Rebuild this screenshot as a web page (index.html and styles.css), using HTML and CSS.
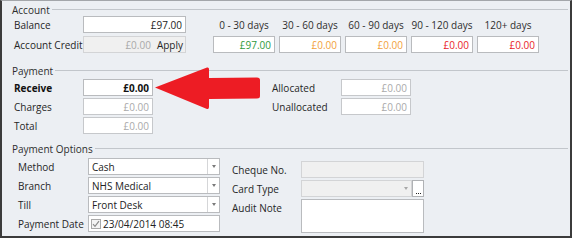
FILE: index.html
```html
<!DOCTYPE html>
<html>
<head>
<meta charset="utf-8">
<link rel="stylesheet" href="styles.css">
</head>
<body>
<div class="frame">
  <section class="group">
    <div class="legend"><span>Account</span></div>
    <div class="acc-body">
      <div class="grid acc-form">
        <label>Balance</label>
        <div class="field">£97.00</div>
        <label>Account Credit</label>
        <div class="field disabled credit"><span>£0.00</span><span class="apply">Apply</span></div>
      </div>
      <div class="aging">
        <div class="head">0 - 30 days</div>
        <div class="head">30 - 60 days</div>
        <div class="head">60 - 90 days</div>
        <div class="head">90 - 120 days</div>
        <div class="head">120+ days</div>
        <div class="field green">£97.00</div>
        <div class="field orange">£0.00</div>
        <div class="field orange">£0.00</div>
        <div class="field red">£0.00</div>
        <div class="field red">£0.00</div>
      </div>
    </div>
  </section>

  <section class="group payment">
    <div class="legend"><span>Payment</span></div>
    <div class="pay-body">
      <div class="grid pay-form">
        <label class="bold">Receive</label>
        <div class="field bold-val">£0.00</div>
        <label>Charges</label>
        <div class="field muted">£0.00</div>
        <label>Total</label>
        <div class="field muted">£0.00</div>
      </div>
      <div class="grid alloc-form">
        <label>Allocated</label>
        <div class="field muted">£0.00</div>
        <label>Unallocated</label>
        <div class="field muted">£0.00</div>
      </div>
    </div>
  </section>

  <section class="group options">
    <div class="legend"><span>Payment Options</span></div>
    <div class="opt-body">
      <div class="grid opt-left">
        <label>Method</label>
        <div class="combo"><span class="val">Cash</span><span class="drop"><i class="tri"></i></span></div>
        <label>Branch</label>
        <div class="combo"><span class="val">NHS Medical</span><span class="drop"><i class="tri"></i></span></div>
        <label>Till</label>
        <div class="combo"><span class="val">Front Desk</span><span class="drop"><i class="tri"></i></span></div>
        <label>Payment Date</label>
        <div class="combo date"><span class="check"><svg width="8" height="8" viewBox="0 0 8 8"><path d="M1 4.2 L3 6.3 L7 1.2" fill="none" stroke="#8a8a8a" stroke-width="1.2"/></svg></span><span class="val">23/04/2014 08:45</span></div>
      </div>
      <div class="grid opt-right">
        <label>Cheque No.</label>
        <div class="field disabled"></div>
        <label>Card Type</label>
        <div class="card-row">
          <div class="combo disabled-combo"><span class="val"></span><span class="drop plain"><i class="tri light"></i></span></div>
          <div class="ellipsis"><i></i><i></i><i></i></div>
        </div>
        <label class="top">Audit Note</label>
        <div class="field note"></div>
      </div>
    </div>
  </section>

  <svg class="arrow" width="572" height="238" viewBox="0 0 572 238">
    <path d="M155 87.5 L207 67.5 Q209 67 209 69 L209 78 L257 77.5 Q260 77.5 260 80 L260 96 Q260 98.5 257 98.5 L209 99 L209 107 Q209 109.5 207 109 Z" fill="#ed1c24"/>
  </svg>
</div>
</body>
</html>
```

FILE: styles.css
```css
html, body {
  margin: 0;
  padding: 0;
  background: #ffffff;
}

body {
  font-family: "Open Sans", "Liberation Sans", sans-serif;
  font-size: 10px;
  color: #262626;
}

.frame {
  position: relative;
  box-sizing: border-box;
  width: 572px;
  height: 238px;
  background: #eceff3;
  border-left: 2px solid #3b3b3b;
  border-right: 2px solid #3b3b3b;
  border-bottom: 2px solid #3b3b3b;
  border-top: 1px solid #a3a6aa;
  padding: 2px 2px 0 10px;
}

.legend {
  display: flex;
  align-items: center;
  height: 13px;
  gap: 2px;
  color: #2e2e2e;
}

.legend::after {
  content: "";
  flex: 1;
  border-top: 1px solid #c2c6cb;
}

.grid {
  display: grid;
  grid-auto-rows: 17px;
  align-items: center;
}

label {
  white-space: nowrap;
}

.bold {
  font-weight: 700;
  color: #111;
}

.field {
  box-sizing: border-box;
  height: 17px;
  background: #ffffff;
  border: 1px solid #b9bbbe;
  display: flex;
  align-items: center;
  justify-content: flex-end;
  padding: 0 3px;
  white-space: nowrap;
  color: #222;
}

.field.disabled {
  background: #f0f0f0;
  border-color: #d3d4d6;
  color: #a9a9a9;
}

.field.muted {
  color: #aaaaaa;
  border-color: #c6c8cb;
}

.bold-val {
  font-weight: 700;
  color: #111;
}

/* Account */
.acc-body {
  display: flex;
  padding-left: 2px;
}

.acc-form {
  grid-template-columns: 69px 103px;
  row-gap: 3px;
}

.credit {
  gap: 6px;
  padding-right: 2px;
}

.credit .apply {
  color: #262626;
}

.aging {
  display: grid;
  grid-template-columns: repeat(5, 62px);
  grid-auto-rows: 17px;
  column-gap: 4px;
  row-gap: 3px;
  margin-left: 27px;
  align-items: center;
}

.aging .head {
  text-align: center;
  white-space: nowrap;
  color: #2e2e2e;
}

.green { color: #2f9a3c; }
.orange { color: #f2a13a; }
.red { color: #e91c28; }

/* Payment */
.payment {
  margin-top: 11px;
}

.pay-body {
  display: flex;
  padding-left: 2px;
  margin-top: 2px;
}

.pay-form {
  grid-template-columns: 69px 70px;
  row-gap: 2px;
}

.alloc-form {
  grid-template-columns: 69px 70px;
  row-gap: 2px;
  margin-left: 119px;
  align-content: start;
}

/* Options */
.options {
  margin-top: 8px;
}

.opt-body {
  display: flex;
  padding-left: 6px;
  margin-top: 3px;
}

.opt-left {
  grid-template-columns: 70px 132px;
  row-gap: 2px;
}

.opt-right {
  grid-template-columns: 69px 123px;
  grid-template-rows: 17px 17px 34px;
  row-gap: 2px;
  margin-left: 12px;
  margin-top: 3px;
  align-content: start;
}

.combo {
  box-sizing: border-box;
  height: 17px;
  display: flex;
  align-items: stretch;
  background: #fff;
  border: 1px solid #b9bbbe;
  color: #222;
}

.combo .val {
  flex: 1;
  display: flex;
  align-items: center;
  padding-left: 3px;
  white-space: nowrap;
}

.combo .drop {
  width: 11px;
  border-left: 1px solid #d5d6d8;
  display: flex;
  align-items: center;
  justify-content: center;
}

.combo .drop.plain {
  border-left: none;
}

.tri {
  width: 0;
  height: 0;
  border-left: 2.5px solid transparent;
  border-right: 2.5px solid transparent;
  border-top: 3px solid #7a7a7a;
}

.tri.light {
  border-top-color: #a8a8a8;
}

.date .check {
  box-sizing: border-box;
  width: 10px;
  height: 10px;
  margin: 3px 1px 0 2px;
  border: 1px solid #a9a9a9;
  background: #f4f4f4;
  display: flex;
  align-items: center;
  justify-content: center;
}

.date .val {
  padding-left: 1px;
}

.card-row {
  display: flex;
  height: 17px;
}

.disabled-combo {
  width: 111px;
  background: #f0f0f0;
  border-color: #d3d4d6;
}

.ellipsis {
  box-sizing: border-box;
  width: 12px;
  height: 17px;
  background: #fff;
  border: 1px solid #b0b2b5;
  display: flex;
  align-items: flex-end;
  justify-content: center;
  gap: 1px;
  padding-bottom: 2px;
}

.ellipsis i {
  width: 1px;
  height: 1px;
  background: #222;
}

.top {
  align-self: start;
  padding-top: 2px;
}

.note {
  height: 34px;
}

.arrow {
  position: absolute;
  left: -2px;
  top: -1px;
  pointer-events: none;
}
```
